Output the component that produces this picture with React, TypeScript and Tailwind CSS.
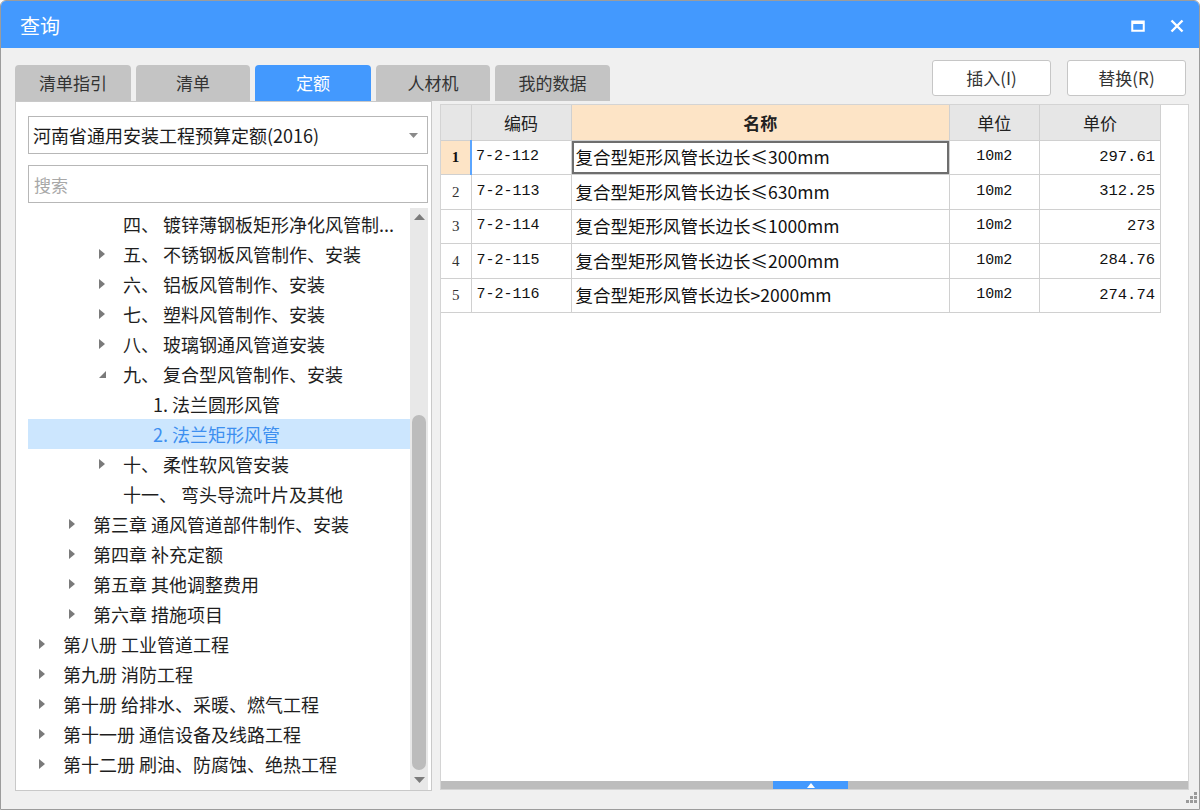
import React from "react";

interface TreeNode {
  level: number;
  label: string;
  arrow: "none" | "right" | "down";
  selected?: boolean;
}

interface Quota {
  code: string;
  name: string;
  unit: string;
  price: string;
}

const tabs = [
  { label: "清单指引", width: 116 },
  { label: "清单", width: 114 },
  { label: "定额", width: 116 },
  { label: "人材机", width: 114 },
  { label: "我的数据", width: 115 },
];

const tree: TreeNode[] = [
  { level: 2, label: "四、 镀锌薄钢板矩形净化风管制...", arrow: "none" },
  { level: 2, label: "五、 不锈钢板风管制作、安装", arrow: "right" },
  { level: 2, label: "六、 铝板风管制作、安装", arrow: "right" },
  { level: 2, label: "七、 塑料风管制作、安装", arrow: "right" },
  { level: 2, label: "八、 玻璃钢通风管道安装", arrow: "right" },
  { level: 2, label: "九、 复合型风管制作、安装", arrow: "down" },
  { level: 3, label: "1. 法兰圆形风管", arrow: "none" },
  { level: 3, label: "2. 法兰矩形风管", arrow: "none", selected: true },
  { level: 2, label: "十、 柔性软风管安装", arrow: "right" },
  { level: 2, label: "十一、 弯头导流叶片及其他", arrow: "none" },
  { level: 1, label: "第三章 通风管道部件制作、安装", arrow: "right" },
  { level: 1, label: "第四章 补充定额", arrow: "right" },
  { level: 1, label: "第五章 其他调整费用", arrow: "right" },
  { level: 1, label: "第六章 措施项目", arrow: "right" },
  { level: 0, label: "第八册 工业管道工程", arrow: "right" },
  { level: 0, label: "第九册 消防工程", arrow: "right" },
  { level: 0, label: "第十册 给排水、采暖、燃气工程", arrow: "right" },
  { level: 0, label: "第十一册 通信设备及线路工程", arrow: "right" },
  { level: 0, label: "第十二册 刷油、防腐蚀、绝热工程", arrow: "right" },
];

const quotas: Quota[] = [
  { code: "7-2-112", name: "复合型矩形风管长边长≤300mm", unit: "10m2", price: "297.61" },
  { code: "7-2-113", name: "复合型矩形风管长边长≤630mm", unit: "10m2", price: "312.25" },
  { code: "7-2-114", name: "复合型矩形风管长边长≤1000mm", unit: "10m2", price: "273" },
  { code: "7-2-115", name: "复合型矩形风管长边长≤2000mm", unit: "10m2", price: "284.76" },
  { code: "7-2-116", name: "复合型矩形风管长边长>2000mm", unit: "10m2", price: "274.74" },
];

const ui = { fontFamily: '"Noto Sans CJK SC", "Liberation Sans", sans-serif' };
const mono = { fontFamily: '"Liberation Mono", "Noto Sans CJK SC", monospace' };

function Arrow({ kind }: { kind: TreeNode["arrow"] }) {
  if (kind === "right") {
    return (
      <svg width="8" height="12" viewBox="0 0 8 12">
        <polygon points="1,1 7,6 1,11" fill="#7a7a7a" />
      </svg>
    );
  }
  if (kind === "down") {
    return (
      <svg width="9" height="12" viewBox="0 0 9 12">
        <polygon points="8,3 8,10 1,10" fill="#7a7a7a" />
      </svg>
    );
  }
  return <span className="w-[8px]" />;
}

export default function App() {
  return (
    <div
      className="w-[1200px] h-[810px] flex flex-col bg-[#f0f0f0] border border-[#9c9c9c] rounded-t-[6px] overflow-hidden"
      style={ui}
    >
      {/* title bar */}
      <div className="h-[47px] shrink-0 bg-[#4399fe] flex items-center justify-between pl-[19px] pr-[15px] pt-[3px]">
        <span className="text-white text-[20px] leading-none">查询</span>
        <div className="flex items-center gap-[25px]">
          <svg width="14" height="12" viewBox="0 0 14 12">
            <rect x="1.25" y="1.5" width="11.5" height="9.25" fill="none" stroke="#fff" strokeWidth="2" />
            <rect x="1" y="1" width="12" height="3" fill="#fff" />
          </svg>
          <svg width="14" height="14" viewBox="0 0 14 14">
            <path d="M1.5 1.5 L12.5 12.5 M12.5 1.5 L1.5 12.5" stroke="#fff" strokeWidth="2.4" />
          </svg>
        </div>
      </div>

      {/* body */}
      <div className="flex-1 flex gap-[8px] pl-[14px] pr-[10px] pb-[18px] relative">
        {/* left column */}
        <div className="w-[417px] shrink-0 flex flex-col">
          <div className="flex gap-[5px] pt-[17px] w-max">
            {tabs.map((tab) => (
              <div
                key={tab.label}
                style={{ width: tab.width }}
                className={
                  tab.label === "定额"
                    ? "h-[36px] shrink-0 rounded-t-[4px] bg-[#4399fe] text-white text-[17px] flex items-center justify-center"
                    : "h-[36px] shrink-0 rounded-t-[4px] bg-[#c4c4c4] text-[#333] text-[17px] flex items-center justify-center"
                }
              >
                {tab.label}
              </div>
            ))}
          </div>

          <div className="flex-1 bg-white border border-[#c9c9c9] flex flex-col pl-[12px] pr-[3px] pt-[14px]">
            <div className="h-[38px] border border-[#b7b7b7] flex items-center justify-between pl-[4px] pr-[9px]">
              <span className="text-[18px] text-[#1b1b1b] leading-none">
                河南省通用安装工程预算定额(2016)
              </span>
              <svg width="9" height="5" viewBox="0 0 9 5">
                <polygon points="0,0 9,0 4.5,5" fill="#8a8a8a" />
              </svg>
            </div>
            <div className="h-[38px] mt-[11px] border border-[#b7b7b7] flex items-center pl-[5px]">
              <span className="text-[17px] text-[#a8a8a8] leading-none">搜索</span>
            </div>

            <div className="flex-1 flex mt-[5px]">
              <div className="flex-1 pt-[1px]">
                {tree.map((node) => (
                  <div
                    key={node.label}
                    className={
                      node.selected
                        ? "h-[30px] flex items-center bg-[#cce6fe] text-[#3d8ff0]"
                        : "h-[30px] flex items-center text-[#1e1e1e]"
                    }
                  >
                    <span
                      className="flex items-center justify-center w-[12px] shrink-0"
                      style={{ marginLeft: 8 + node.level * 30 }}
                    >
                      <Arrow kind={node.arrow} />
                    </span>
                    <span className="ml-[15px] text-[18px] leading-none whitespace-nowrap">
                      {node.label}
                    </span>
                  </div>
                ))}
              </div>

              {/* vertical scrollbar */}
              <div className="w-[18px] bg-[#e8e8e8] flex flex-col items-center">
                <div className="h-[16px] flex items-center justify-center pt-[2px]">
                  <svg width="11" height="6" viewBox="0 0 11 6">
                    <polygon points="5.5,0 11,6 0,6" fill="#7c7c7c" />
                  </svg>
                </div>
                <div className="flex-1" />
                <div className="w-[14px] h-[355px] rounded-full bg-[#bcbcbc]" />
                <div className="h-[20px] flex items-center justify-center">
                  <svg width="11" height="6" viewBox="0 0 11 6">
                    <polygon points="0,0 11,0 5.5,6" fill="#7c7c7c" />
                  </svg>
                </div>
              </div>
            </div>
          </div>
        </div>

        {/* right column */}
        <div className="flex-1 flex flex-col">
          <div className="flex justify-end gap-[16px] pt-[12px] pr-[3px]">
            <button className="w-[119px] h-[36px] bg-white border border-[#c6c6c6] rounded-[3px] text-[17px] text-[#333]">
              插入(I)
            </button>
            <button className="w-[119px] h-[36px] bg-white border border-[#c6c6c6] rounded-[3px] text-[17px] text-[#333]">
              替换(R)
            </button>
          </div>

          <div className="flex-1 mt-[8px] mb-[1px] bg-white border border-[#d4d4d4] flex flex-col">
            <table className="border-collapse w-[720px] table-fixed">
              <colgroup>
                <col className="w-[30px]" />
                <col className="w-[100px]" />
                <col className="w-[378px]" />
                <col className="w-[90px]" />
                <col className="w-[121px]" />
              </colgroup>
              <thead>
                <tr className="h-[35px]">
                  <th className="bg-[#e6e6e6] border border-[#d0d0d0] border-t-0 border-l-0" />
                  <th className="bg-[#e6e6e6] border border-[#d0d0d0] border-t-0 text-[17px] font-normal text-[#222]">
                    编码
                  </th>
                  <th className="bg-[#fde4c6] border border-[#d0d0d0] border-t-0 text-[17px] font-bold text-[#222]">
                    名称
                  </th>
                  <th className="bg-[#e6e6e6] border border-[#d0d0d0] border-t-0 text-[17px] font-normal text-[#222]">
                    单位
                  </th>
                  <th className="bg-[#e6e6e6] border border-[#d0d0d0] border-t-0 text-[17px] font-normal text-[#222]">
                    单价
                  </th>
                </tr>
              </thead>
              <tbody>
                {quotas.map((q, i) => (
                  <tr key={q.code} className="h-[34.5px]">
                    <td
                      className={
                        i === 0
                          ? "bg-[#fde4c6] border border-[#d0d0d0] border-l-0 text-center text-[15px] font-bold text-[#111]"
                          : "border border-[#d0d0d0] border-l-0 text-center text-[15px] text-[#333]"
                      }
                      style={{ fontFamily: '"Liberation Serif", serif' }}
                    >
                      {i + 1}
                    </td>
                    <td
                      className={
                        i === 0
                          ? "border border-[#d0d0d0] border-l-2 border-l-[#5aa5ff] pl-[4px] text-[15px] text-[#111]"
                          : "border border-[#d0d0d0] pl-[5px] text-[15px] text-[#111]"
                      }
                      style={mono}
                    >
                      {q.code}
                    </td>
                    <td
                      className={
                        i === 0
                          ? "border border-[#d0d0d0] shadow-[inset_0_0_0_2px_#6e6e6e] pl-[4px] text-[17.5px] text-[#111] whitespace-nowrap"
                          : "border border-[#d0d0d0] pl-[4px] text-[17.5px] text-[#111] whitespace-nowrap"
                      }
                    >
                      {q.name}
                    </td>
                    <td className="border border-[#d0d0d0] text-center text-[15px] text-[#111]" style={mono}>
                      {q.unit}
                    </td>
                    <td className="border border-[#d0d0d0] text-right pr-[5px] text-[15.5px] text-[#111]" style={mono}>
                      {q.price}
                    </td>
                  </tr>
                ))}
              </tbody>
            </table>

            <div className="flex-1" />

            {/* horizontal scrollbar */}
            <div className="h-[8px] bg-[#bdbdbd] flex">
              <div className="ml-[332px] w-[75px] bg-[#4399fe] flex items-center justify-center">
                <svg width="8" height="5" viewBox="0 0 8 5">
                  <polygon points="4,0 8,5 0,5" fill="#fff" />
                </svg>
              </div>
            </div>
          </div>
        </div>

        {/* resize grip */}
        <div className="absolute right-[2px] bottom-[6px] grid grid-cols-3 gap-[1px]">
          <span />
          <span />
          <span className="w-[3px] h-[3px] bg-[#9a9a9a]" />
          <span />
          <span className="w-[3px] h-[3px] bg-[#9a9a9a]" />
          <span className="w-[3px] h-[3px] bg-[#9a9a9a]" />
          <span className="w-[3px] h-[3px] bg-[#9a9a9a]" />
          <span className="w-[3px] h-[3px] bg-[#9a9a9a]" />
          <span className="w-[3px] h-[3px] bg-[#9a9a9a]" />
        </div>
      </div>
    </div>
  );
}
